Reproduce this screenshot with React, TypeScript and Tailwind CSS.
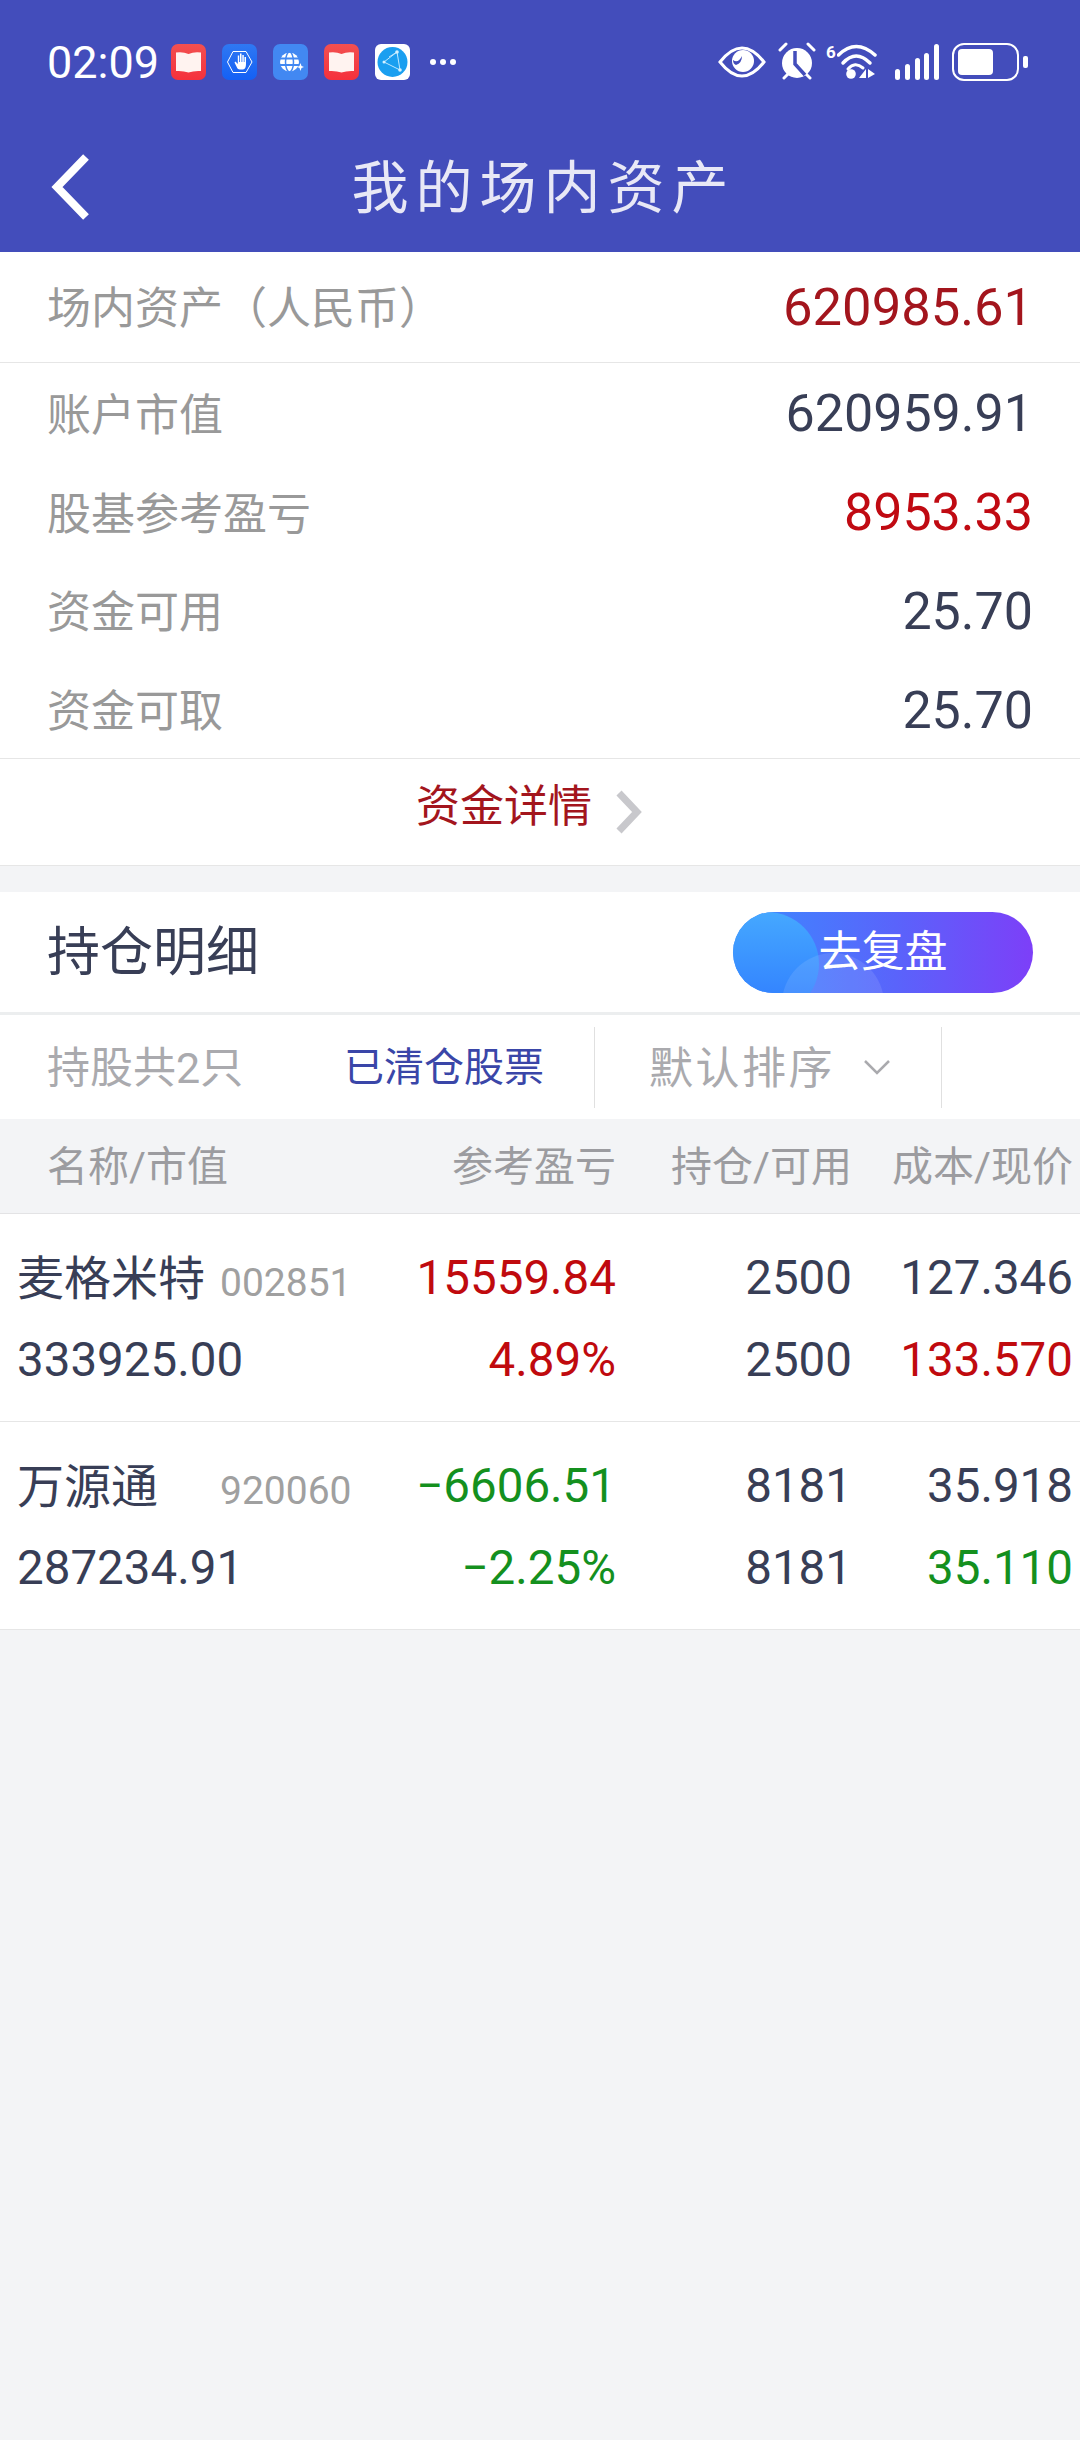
const FONT = "font-['Roboto','Noto_Sans_CJK_SC',sans-serif]";

const BookIcon = () => (
  <svg width="35" height="36" viewBox="0 0 35 36" className="shrink-0">
    <defs>
      <linearGradient id="bookRed" x1="0" y1="0" x2="0" y2="1">
        <stop offset="0" stopColor="#f25050" />
        <stop offset="1" stopColor="#f5303c" />
      </linearGradient>
    </defs>
    <rect width="35" height="36" rx="7" fill="url(#bookRed)" />
    <path d="M5 8.500 Q12 7.500 17.500 10 Q23 7.500 30 8.500 V27 Q23 26.500 17.500 28.500 Q12 26.500 5 27 Z" fill="#fff3f0" />
  </svg>
);

const HandIcon = () => (
  <svg width="35" height="36" viewBox="0 0 35 36" className="shrink-0">
    <defs>
      <linearGradient id="handBlue" x1="0" y1="0" x2="0" y2="1">
        <stop offset="0" stopColor="#2f78f2" />
        <stop offset="1" stopColor="#1460f5" />
      </linearGradient>
    </defs>
    <rect width="35" height="36" rx="7" fill="url(#handBlue)" />
    <path d="M11 7.500 H24 L30 18 L24 28.500 H11 L5.500 18 Z" fill="none" stroke="#fff" strokeWidth="1" />
    <path d="M12.500 18.500 L15.500 24.500 Q16.500 25.500 18 25.500 H21 Q24 25 24 20 V13 H22.500 V18 H21.800 V11 H20.300 V18 H19.500 V9.500 H18 V18 H17.200 V11.500 H15.800 V20 L13.500 17.500 Z" fill="#fff" />
  </svg>
);

const GlobeIcon = () => (
  <svg width="35" height="36" viewBox="0 0 35 36" className="shrink-0">
    <rect width="35" height="36" rx="7" fill="#4288f2" />
    <circle cx="16.500" cy="18" r="9.500" fill="#fff" />
    <path d="M6 14.500 H27 M6 21 H27" stroke="#4288f2" strokeWidth="1.800" />
    <ellipse cx="16.500" cy="18" rx="4" ry="10" fill="none" stroke="#4288f2" strokeWidth="1.500" />
    <path d="M27.500 19 L28.500 22 L31 23 L28.500 24 L27.500 27 L26.500 24 L24 23 L26.500 22 Z" fill="#fff" />
  </svg>
);

const NetworkIcon = () => (
  <svg width="35" height="36" viewBox="0 0 35 36" className="shrink-0">
    <rect width="35" height="36" rx="6" fill="#ffffff" />
    <circle cx="17.500" cy="18" r="15" fill="#1a9ff0" />
    <path d="M22 8 L25 26 L9 18 Z M22 8 L14 13" fill="none" stroke="#bfe8ff" strokeWidth="1" />
    <circle cx="22" cy="8" r="1.800" fill="#d5f1ff" />
    <circle cx="25" cy="26" r="1.800" fill="#d5f1ff" />
    <circle cx="9" cy="18" r="1.500" fill="#d5f1ff" />
  </svg>
);

const StatusRight = () => (
  <div className="flex items-center h-[40px]">
    {/* eye */}
    <svg width="48" height="32" viewBox="0 0 48 32" className="shrink-0">
      <path d="M2 16 Q13 2 24 2 Q35 2 46 16 Q35 30 24 30 Q13 30 2 16 Z" fill="none" stroke="#fff" strokeWidth="3" />
      <circle cx="25" cy="15" r="11" fill="#fff" />
      <path d="M15 14 Q20 18 24 10 Q24 17 18 19 Q15 18 15 14 Z" fill="#434dbb" />
    </svg>
    {/* alarm */}
    <svg width="38" height="38" viewBox="0 0 38 38" className="shrink-0 ml-[12px] -mt-[3px]">
      <circle cx="19" cy="21" r="15" fill="#fff" />
      <path d="M2 8 L8 2 M36 8 L30 2" stroke="#fff" strokeWidth="3" strokeLinecap="round" />
      <path d="M6 36 L10 32 M32 36 L28 32" stroke="#fff" strokeWidth="3" strokeLinecap="round" />
      <path d="M17 9 V22 L27 33" fill="none" stroke="#434dbb" strokeWidth="3.500" />
    </svg>
    {/* wifi with the 6 badge */}
    <span className="text-[17px] leading-none font-bold text-white ml-[10px] -mt-[19px] w-[11px]">6</span>
    <svg width="40" height="36" viewBox="0 0 40 36" className="shrink-0 -mt-[3px]">
      <path d="M1.500 12 Q19 -5 38 12" fill="none" stroke="#fff" strokeWidth="3.500" strokeLinecap="round" />
      <path d="M6 20 Q19 6 33 20" fill="none" stroke="#fff" strokeWidth="3.500" strokeLinecap="round" />
      <path d="M11 26 Q18 18 26 25" fill="none" stroke="#fff" strokeWidth="3" strokeLinecap="round" />
      <circle cx="14" cy="31" r="4.800" fill="#fff" />
      <path d="M29 26 V35 H22 Z M31 26 L38 31 L31 35 Z" fill="#fff" />
    </svg>
    {/* signal */}
    <svg width="44" height="36" viewBox="0 0 44 36" className="shrink-0 ml-[18px]">
      <rect x="0" y="25" width="5" height="11" rx="2.500" fill="#fff" />
      <rect x="10" y="20" width="5" height="16" rx="2.500" fill="#fff" />
      <rect x="20" y="14" width="5" height="22" rx="2.500" fill="#fff" />
      <rect x="29" y="9" width="5" height="27" rx="2.500" fill="#fff" />
      <rect x="39" y="0" width="5" height="36" rx="2.500" fill="#fff" />
    </svg>
    {/* battery */}
    <svg width="76" height="38" viewBox="0 0 76 38" className="shrink-0 ml-[13px]">
      <rect x="1" y="1" width="65" height="36" rx="11" fill="none" stroke="#fff" strokeWidth="2" />
      <rect x="6" y="6" width="35" height="26" rx="4" fill="#fff" />
      <rect x="71" y="13" width="5" height="12" rx="2" fill="#fff" />
    </svg>
  </div>
);

const summary = [
  { label: "账户市值", value: "620959.91", color: "text-[#383e56]" },
  { label: "股基参考盈亏", value: "8953.33", color: "text-[#c00a12]" },
  { label: "资金可用", value: "25.70", color: "text-[#383e56]" },
  { label: "资金可取", value: "25.70", color: "text-[#383e56]" },
];

const holdings = [
  {
    name: "麦格米特",
    code: "002851",
    value: "333925.00",
    pnl: "15559.84",
    pct: "4.89%",
    qty: "2500",
    cost: "127.346",
    price: "133.570",
    tone: "text-[#c00a0e]",
  },
  {
    name: "万源通",
    code: "920060",
    value: "287234.91",
    pnl: "−6606.51",
    pct: "−2.25%",
    qty: "8181",
    cost: "35.918",
    price: "35.110",
    tone: "text-[#14901e]",
  },
];

export default function App() {
  return (
    <div className={`${FONT} min-h-[2440px] w-[1080px] bg-[#f3f4f6]`}>
      {/* Header */}
      <header className="h-[252px] bg-[#434dbb] text-white">
        <div className="h-[124px] pl-[47px] pr-[52px] flex items-center justify-between">
          <div className="flex items-center">
            <span className="text-[45px] leading-none w-[124px]">02:09</span>
            <div className="flex items-center gap-[16px]">
              <BookIcon />
              <HandIcon />
              <GlobeIcon />
              <BookIcon />
              <NetworkIcon />
            </div>
            <div className="flex gap-[4px] ml-[20px]">
              <span className="w-[6px] h-[6px] rounded-full bg-white" />
              <span className="w-[6px] h-[6px] rounded-full bg-white" />
              <span className="w-[6px] h-[6px] rounded-full bg-white" />
            </div>
          </div>
          <StatusRight />
        </div>
        <div className="relative h-[128px] flex items-center justify-center">
          <svg width="40" height="68" viewBox="0 0 40 68" className="absolute left-[51px] top-[29px]">
            <path d="M35 4 L6 34 L35 64" fill="none" stroke="#fff" strokeWidth="8" />
          </svg>
          <span className="text-[57px] leading-none tracking-[7px] text-[#e8e8f6] pl-[7px]">我的场内资产</span>
        </div>
      </header>

      {/* Summary */}
      <section className="bg-white">
        <div className="h-[111px] pl-[47px] pr-[47px] flex items-center justify-between border-b border-[#e6e6e6]">
          <span className="text-[44px] text-[#999999] mt-[3px]">场内资产（人民币）</span>
          <span className="text-[52.500px] text-[#a3151d]">620985.61</span>
        </div>
        <div className="h-[396px] flex flex-col border-b border-[#e6e6e6]">
          {summary.map((row) => (
            <div key={row.label} className="flex-1 pl-[47px] pr-[47px] flex items-center justify-between">
              <span className="text-[44px] text-[#999999] mt-[7px]">{row.label}</span>
              <span className={`text-[52px] mt-[4px] ${row.color}`}>{row.value}</span>
            </div>
          ))}
        </div>
        <div className="h-[107px] flex items-center justify-center pr-[22px] border-b border-[#e6e6e6]">
          <span className="text-[44px] text-[#a3151d] -mt-[10px]">资金详情</span>
          <svg width="28" height="44" viewBox="0 0 28 44" className="ml-[22px]">
            <path d="M5 3 L23 22 L5 41" fill="none" stroke="#c8c8cc" strokeWidth="7" />
          </svg>
        </div>
      </section>

      {/* Holdings */}
      <section className="mt-[26px] bg-white">
        <div className="h-[123px] pl-[47px] pr-[47px] flex items-center justify-between border-b-[3px] border-[#eceeef]">
          <span className="text-[53px] text-[#383e56] mt-[4px]">持仓明细</span>
          <button className="relative w-[300px] h-[81px] rounded-full overflow-hidden bg-[linear-gradient(90deg,#3a8cff,#5a63fb_55%,#7d3ff8)]">
            <span className="absolute left-[-18px] top-[0px] w-[104px] h-[104px] rounded-full bg-[linear-gradient(180deg,#45a8ff,#2f7bff)]" />
            <span className="absolute left-[49px] top-[41px] w-[102px] h-[102px] rounded-full bg-white/10" />
            <span className="relative text-[43px] leading-none text-white">去复盘</span>
          </button>
        </div>
        <div className="h-[104px] flex items-center">
          <span className="pl-[47px] w-[345px] text-[43px] text-[#aaaaae] mt-[2px]">持股共2只</span>
          <span className="w-[251px] h-[81px] -ml-[1px] flex items-center text-[40px] text-[#3a46a8] border-r border-[#e0e0e0]">
            <span className="mt-[2px]">已清仓股票</span>
          </span>
          <div className="w-[347px] h-[81px] flex items-center pl-[54px] border-r border-[#e0e0e0]">
            <span className="text-[44px] tracking-[2.500px] text-[#aaaaae] mt-[3px]">默认排序</span>
            <svg width="28" height="16" viewBox="0 0 28 16" className="ml-[28px]">
              <path d="M2 2 L14 14 L26 2" fill="none" stroke="#aaaaae" strokeWidth="2.500" />
            </svg>
          </div>
        </div>
      </section>

      {/* Table */}
      <div className="h-[95px] grid grid-cols-[599px_236px_221px] pl-[17px] items-center bg-[#f3f4f6] border-b border-[#e3e3e5] text-[41px] text-[#9c9ca0]">
        <div className="flex justify-between mt-[3px]">
          <span className="pl-[30px]">名称/市值</span>
          <span>参考盈亏</span>
        </div>
        <span className="text-right mt-[3px]">持仓/可用</span>
        <span className="text-right whitespace-nowrap mt-[3px]">成本/现价</span>
      </div>
      {holdings.map((h) => (
        <div
          key={h.code}
          className="h-[208px] pt-[24px] pb-[20px] pl-[17px] bg-white border-b border-[#e6e6e6] grid grid-cols-[599px_236px_221px] grid-rows-[82px_82px] items-center text-[47.500px] text-[#383e56]"
        >
          <div className="flex justify-between items-center">
            <div className="flex items-center">
              <span className="w-[203px] text-[47px]">{h.name}</span>
              <span className="text-[39px] text-[#a0a0a0] mt-[8px]">{h.code}</span>
            </div>
            <span className={h.tone}>{h.pnl}</span>
          </div>
          <span className="text-right">{h.qty}</span>
          <span className="text-right">{h.cost}</span>
          <div className="flex justify-between items-center">
            <span>{h.value}</span>
            <span className={h.tone}>{h.pct}</span>
          </div>
          <span className="text-right">{h.qty}</span>
          <span className={`text-right ${h.tone}`}>{h.price}</span>
        </div>
      ))}
    </div>
  );
}
